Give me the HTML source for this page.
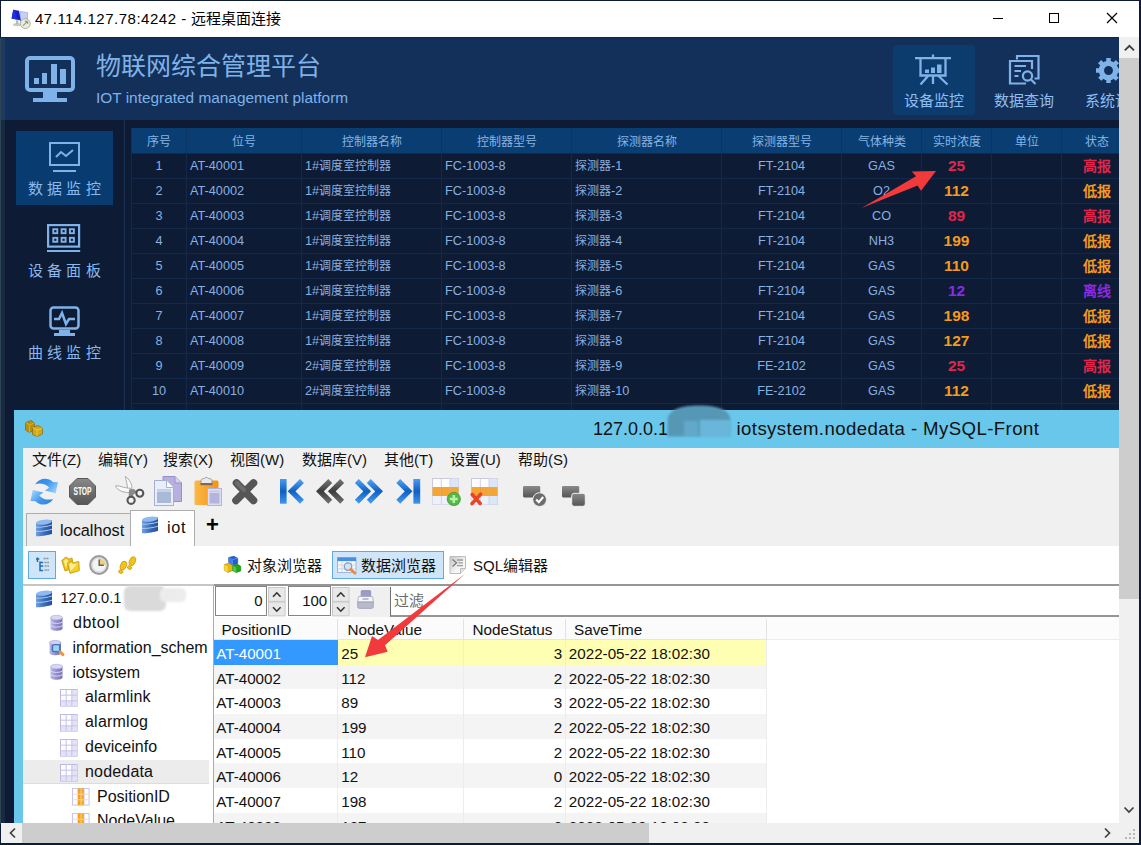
<!DOCTYPE html>
<html lang="zh-CN">
<head>
<meta charset="utf-8">
<title>47.114.127.78:4242 - 远程桌面连接</title>
<style>
*{box-sizing:border-box;margin:0;padding:0}
html,body{width:1141px;height:845px;overflow:hidden;background:#fff}
body{font-family:"Liberation Sans",sans-serif;position:relative;color:#000}
.abs{position:absolute}
svg{display:block;overflow:visible}
#win{position:absolute;left:0;top:0;width:1141px;height:845px;background:#0d1b34;overflow:hidden}
#tbar{position:absolute;left:1px;top:1px;width:1138px;height:36px;background:#fff}
#tbar .ttl{position:absolute;left:34px;top:8.300px;font-size:15px;line-height:20px;white-space:nowrap;color:#000;letter-spacing:0.51px}
#tbar .ttl b{font-weight:normal;font-size:15px;letter-spacing:0}
#view{position:absolute;left:1px;top:37px;width:1118px;height:786px;overflow:hidden;background:#0d1b34}
/* IoT app */
#hdr{position:absolute;left:0;top:0;width:1119px;height:83px;background:#13305a}
#hdr .t1{position:absolute;left:95px;top:11px;font-size:25px;line-height:36px;color:#7fb2e8;white-space:nowrap}
#hdr .t2{position:absolute;left:95px;top:51px;font-size:15.4px;line-height:20px;color:#7fb2e8;white-space:nowrap}
.topbtn{position:absolute;top:8px;height:70px;width:82px;border-radius:4px;color:#8fbdf0;font-size:15px;text-align:center}
.topbtn span{position:absolute;left:0;right:0;top:46px;line-height:20px;white-space:nowrap}
.topbtn.on{background:#0c3b6e}
.topbtn svg{position:absolute;left:22px;top:9px}
.sbtn{position:absolute;left:15px;width:97px;height:74px;color:#8ab8ec;font-size:15px;text-align:center}
.sbtn.on{background:#083c70}
.sbtn span{position:absolute;left:0;right:0;top:47.7px;line-height:20px;letter-spacing:4.2px;padding-left:4px;white-space:nowrap}
.sbtn svg{position:absolute;left:33px;top:11px}
#vsep{position:absolute;left:123px;top:83px;width:1px;height:300px;background:#1c3050}
/* IoT table */
#tbl{position:absolute;left:130px;top:91px;width:1000px;height:300px;font-size:12px;color:#88b1e1;overflow:hidden}
#tbl .hr{position:absolute;left:0;top:0;height:25px;width:1000px;background:#0a3e72}
#tbl .r{position:absolute;left:0;height:25px;width:1000px;border-top:1px solid #14284a}
#tbl .c{position:absolute;top:0;height:25px;line-height:24px;white-space:nowrap;text-align:center;border-left:1px solid #14284a}
#tbl .hr .c{border-left:1px solid #0d3360;color:#86b4e6;line-height:28px}
#tbl .c.l{text-align:left;padding-left:3px}
.en{font-size:12.7px}
#tbl .v{font-weight:bold;font-size:15.5px}
#tbl .s{font-weight:bold;font-size:14px}
.hi{color:#e0264a}.lo{color:#f59a1c}.off{color:#8a2be2}
/* MySQL-Front window */
#my{position:absolute;left:13px;top:373px;width:1200px;height:500px;background:#69c7eb}
#my .cap{position:absolute;top:7.600px;font-size:18px;line-height:22px;white-space:nowrap;color:#111}
#cl{position:absolute;left:9px;top:38px;width:1200px;height:470px;background:#f0f0f0}
.menu{position:absolute;top:2px;font-size:15px;line-height:20px;white-space:nowrap;color:#111}
.ti{position:absolute}
.tab{position:absolute;font-size:16.3px;line-height:22px;white-space:nowrap;color:#111}
#page{position:absolute;left:0;top:98px;width:1200px;height:400px;background:#fff}
.tbtn{position:absolute;font-size:15px;line-height:20px;white-space:nowrap;color:#111}
.tt{position:absolute;font-size:16px;line-height:22px;white-space:nowrap;color:#111}
.tselbg{position:absolute;left:0;width:186px;height:23.5px;background:#ececec;border-bottom:1px solid #dcdcdc}
.gr{position:absolute;left:0;width:553px;height:24.66px;font-size:15.2px;line-height:27px;color:#111;background:#fff;overflow:hidden}
.gr.alt{background:#f4f4f4}
.gr.sel{background:#ffffb3}
.gc{position:absolute;top:0;height:24.66px;white-space:nowrap;border-right:1px solid #ececec}
.c1{left:0;width:124px;padding-left:2.2px}
.c2{left:124px;width:126px;padding-left:3.2px}
.c3{left:250px;width:102px;text-align:right;padding-right:2.7px}
.c4{left:352px;width:201px;padding-left:2.8px}
.gr.sel .c1{background:#3399ff;color:#fff;border-right:none}
.gh{position:absolute;top:0;height:22px;font-size:15.3px;line-height:22px;white-space:nowrap;border-right:1px solid #e2e2e2;color:#111}
/* scrollbars */
#vs{position:absolute;left:1119px;top:37px;width:20px;height:786px;background:#f0f0f0}
#vs .th{position:absolute;left:0;top:21px;width:20px;height:541px;background:#cdcdcd}
#hs{position:absolute;left:1px;top:823px;width:1118px;height:20px;background:#f0f0f0}
#hs .th{position:absolute;left:21px;top:0;width:627px;height:20px;background:#cdcdcd}
#corner{position:absolute;left:1119px;top:823px;width:20px;height:20px;background:#f0f0f0}

#tree{position:absolute;left:0;top:41px;width:190px;height:240px;overflow:hidden;background:#fff}
#gw{position:absolute;left:190px;top:40px;width:1000px;height:300px;background:#fff;border-left:1px solid #ababab}
.num{position:absolute;top:0.4px;height:29.6px;border:1.3px solid #858585;background:#fff;font-size:15px;line-height:27px;text-align:right;padding-right:3px;color:#111}
.spin{position:absolute;top:0.6px;width:17.6px;height:29.4px}

</style>
</head>
<body>
<div id="win">
<svg width="0" height="0" style="position:absolute"><defs><linearGradient id="gB" x1="0" y1="0" x2="0" y2="1"><stop offset="0" stop-color="#4a9bf0"/><stop offset=".5" stop-color="#0f5fc4"/><stop offset="1" stop-color="#3f95ee"/></linearGradient><linearGradient id="gG" x1="0" y1="0" x2="0" y2="1"><stop offset="0" stop-color="#6e6e6e"/><stop offset=".5" stop-color="#3c3c3c"/><stop offset="1" stop-color="#6a6a6a"/></linearGradient><linearGradient id="gR" x1="0" y1="0" x2="1" y2="1"><stop offset="0" stop-color="#7fc4fa"/><stop offset="1" stop-color="#1f7fe4"/></linearGradient><linearGradient id="gO" x1="0" y1="0" x2="1" y2="0"><stop offset="0" stop-color="#fbb847"/><stop offset="1" stop-color="#f39416"/></linearGradient><linearGradient id="gS" x1="0" y1="0" x2="0" y2="1"><stop offset="0" stop-color="#8a8a8a"/><stop offset="1" stop-color="#555"/></linearGradient><linearGradient id="gD" x1="0" y1="0" x2="1" y2="0"><stop offset="0" stop-color="#6fa2e2"/><stop offset=".5" stop-color="#3a6cba"/><stop offset="1" stop-color="#264f98"/></linearGradient><linearGradient id="gP" x1="0" y1="0" x2="1" y2="0"><stop offset="0" stop-color="#bcbaea"/><stop offset=".5" stop-color="#8f8dcc"/><stop offset="1" stop-color="#7674b6"/></linearGradient><linearGradient id="gR2" x1="0" y1="0" x2="1" y2="0.6"><stop offset="0" stop-color="#2a80e6"/><stop offset=".55" stop-color="#3f96ee"/><stop offset="1" stop-color="#8ecbfa"/></linearGradient></defs></svg>
  <div id="tbar">
    <div class="abs" style="left:10px;top:8px"><svg width="20" height="20" viewBox="0 0 20 20"><path d="M9 2.5L16.5 3.5V11.5L9.5 12.5Z" fill="#c7d0f4" stroke="#8e98cc" stroke-width=".6"/><path d="M2.2 0.8L8 1.8L9.8 11.5L0.6 9.6Z" fill="#1420c8"/><path d="M2.2 0.8L4 1.1L5.5 10.6L0.6 9.6Z" fill="#2030dc"/><ellipse cx="6" cy="15.6" rx="4.2" ry="1.6" fill="#c9c9c4"/><path d="M5 11L7.4 11.4V15H5Z" fill="#b9b9b6"/><circle cx="14.3" cy="14.6" r="4.9" fill="#e9eee0" stroke="#a9ae9c" stroke-width="1"/><path d="M12 16.6L16.6 12.4M16.6 12.4H13.8M16.6 12.4V15" stroke="#8f9a78" stroke-width="1.1" fill="none"/></svg></div>
    <div class="ttl">47.114.127.78:4242 - <b>远程桌面连接</b></div>
    <div class="abs" style="left:992px;top:16.5px;width:10px;height:1.2px;background:#000"></div>
    <div class="abs" style="left:1048px;top:12px;width:10px;height:10px;border:1.2px solid #000"></div>
    <svg class="abs" style="left:1106px;top:12px" width="10" height="10"><path d="M0 0L10 10M10 0L0 10" stroke="#000" stroke-width="1.2" fill="none"/></svg>
  </div>
  <div id="view">
    <div id="hdr">
      <div class="abs" style="left:24px;top:19px"><svg width="50" height="47" viewBox="0 0 50 47"><rect x="2" y="2" width="46" height="32" rx="3" fill="none" stroke="#7fb2e8" stroke-width="4"/><rect x="9" y="22" width="5" height="6" fill="#7fb2e8"/><rect x="17" y="17" width="5" height="11" fill="#7fb2e8"/><rect x="26" y="8" width="6" height="20" fill="#7fb2e8"/><rect x="35" y="13" width="6" height="15" fill="#7fb2e8"/><rect x="18" y="36" width="14" height="6" fill="#7fb2e8"/><rect x="8" y="42" width="34" height="4" fill="#7fb2e8"/></svg></div>
      <div class="t1">物联网综合管理平台</div>
      <div class="t2">IOT integrated management platform</div>
      <div class="topbtn on" style="left:892px"><svg width="36" height="32" viewBox="0 0 36 32"><g fill="none" stroke="#7fb2e8" stroke-width="2.3"><path d="M0 4.200H36M18 0.500V4.200M5.500 4.200V21.500H30.500V4.200M5.500 30.500L13.500 21.500M32.500 30.500L23 21.500M18 21.500V30"/></g><rect x="10" y="15.500" width="4" height="3.500" fill="#7fb2e8"/><rect x="16" y="13.500" width="4" height="5.500" fill="#7fb2e8"/><rect x="22" y="10.500" width="4.500" height="8.500" fill="#7fb2e8"/></svg><span>设备监控</span></div>
      <div class="topbtn" style="left:982px"><i style="position:absolute;left:2.500px;top:0"><svg width="32" height="32" viewBox="0 0 32 32"><g fill="none" stroke="#7fb2e8" stroke-width="2.200"><path d="M9 5.500V2H30.500V24.500H26.500"/><path d="M18 29.500H2V7H24V15"/><path d="M6.500 12H18M6.500 17H13M6.500 22H10.500"/><circle cx="19.500" cy="22" r="4.600"/><path d="M23 25.500L27.500 30"/></g></svg></i><span>数据查询</span></div>
      <div class="topbtn" style="left:1073px"><i style="position:absolute;left:-0.100px;top:3.800px"><svg width="25" height="25" viewBox="0 0 28 28"><circle cx="14" cy="14" r="8" fill="none" stroke="#7fb2e8" stroke-width="6"/><g stroke="#7fb2e8" stroke-width="5"><path d="M14 0V28M0 14H28M4 4L24 24M24 4L4 24" stroke-dasharray="5 18 5 100"/></g></svg></i><span>系统设置</span></div>
    </div>
    <div id="vsep"></div>
    <div class="sbtn on" style="top:94px"><svg width="32" height="34" viewBox="0 0 32 34"><g fill="none" stroke="#7fb2e8" stroke-width="2"><rect x="1" y="1" width="29" height="22"/><path d="M7 15L12 10L17 14L24 8"/><path d="M4 29H27"/></g></svg><span>数据监控</span></div>
    <div class="sbtn" style="top:176px"><i style="position:absolute;left:-2.500px;top:0"><svg width="34" height="30" viewBox="0 0 34 30"><g fill="none" stroke="#7fb2e8" stroke-width="2.2"><rect x="1.1" y="1.1" width="31" height="21.5"/><path d="M0 27H33.200"/></g><g fill="none" stroke="#7fb2e8" stroke-width="1.900"><rect x="6.300" y="5.200" width="4" height="4"/><rect x="14.600" y="5.200" width="4" height="4"/><rect x="22.900" y="5.200" width="4" height="4"/><rect x="6.300" y="13.800" width="4" height="4"/><rect x="14.600" y="13.800" width="4" height="4"/><rect x="22.900" y="13.800" width="4" height="4"/></g></svg></i><span>设备面板</span></div>
    <div class="sbtn" style="top:258px"><svg width="32" height="32" viewBox="0 0 32 32"><g fill="none" stroke="#7fb2e8" stroke-width="2.5"><rect x="1.5" y="1.5" width="28" height="21" rx="3"/><path d="M5 13H10L13 7L17 18L20 13H26"/></g><rect x="10" y="24" width="11" height="3" fill="#7fb2e8"/><rect x="5" y="27" width="21" height="3" fill="#7fb2e8"/></svg><span>曲线监控</span></div>
<div id="tbl">
<div class="hr"><div class="c " style="left:0px;width:55px">序号</div><div class="c " style="left:55px;width:115px">位号</div><div class="c " style="left:170px;width:140px">控制器名称</div><div class="c " style="left:310px;width:130px">控制器型号</div><div class="c " style="left:440px;width:150px">探测器名称</div><div class="c " style="left:590px;width:120px">探测器型号</div><div class="c " style="left:710px;width:80px">气体种类</div><div class="c " style="left:790px;width:70px">实时浓度</div><div class="c " style="left:860px;width:70px">单位</div><div class="c " style="left:930px;width:70px">状态</div></div>
<div class="r" style="top:25px"><div class="c en" style="left:0px;width:55px">1</div><div class="c l en" style="left:55px;width:115px">AT-40001</div><div class="c l" style="left:170px;width:140px"><span class="en">1#</span>调度室控制器</div><div class="c l en" style="left:310px;width:130px">FC-1003-8</div><div class="c l" style="left:440px;width:150px">探测器<span class="en">-1</span></div><div class="c en" style="left:590px;width:120px">FT-2104</div><div class="c en" style="left:710px;width:80px">GAS</div><div class="c v hi" style="left:790px;width:70px">25</div><div class="c " style="left:860px;width:70px"></div><div class="c s hi" style="left:930px;width:70px">高报</div></div>
<div class="r" style="top:50px"><div class="c en" style="left:0px;width:55px">2</div><div class="c l en" style="left:55px;width:115px">AT-40002</div><div class="c l" style="left:170px;width:140px"><span class="en">1#</span>调度室控制器</div><div class="c l en" style="left:310px;width:130px">FC-1003-8</div><div class="c l" style="left:440px;width:150px">探测器<span class="en">-2</span></div><div class="c en" style="left:590px;width:120px">FT-2104</div><div class="c en" style="left:710px;width:80px">O2</div><div class="c v lo" style="left:790px;width:70px">112</div><div class="c " style="left:860px;width:70px"></div><div class="c s lo" style="left:930px;width:70px">低报</div></div>
<div class="r" style="top:75px"><div class="c en" style="left:0px;width:55px">3</div><div class="c l en" style="left:55px;width:115px">AT-40003</div><div class="c l" style="left:170px;width:140px"><span class="en">1#</span>调度室控制器</div><div class="c l en" style="left:310px;width:130px">FC-1003-8</div><div class="c l" style="left:440px;width:150px">探测器<span class="en">-3</span></div><div class="c en" style="left:590px;width:120px">FT-2104</div><div class="c en" style="left:710px;width:80px">CO</div><div class="c v hi" style="left:790px;width:70px">89</div><div class="c " style="left:860px;width:70px"></div><div class="c s hi" style="left:930px;width:70px">高报</div></div>
<div class="r" style="top:100px"><div class="c en" style="left:0px;width:55px">4</div><div class="c l en" style="left:55px;width:115px">AT-40004</div><div class="c l" style="left:170px;width:140px"><span class="en">1#</span>调度室控制器</div><div class="c l en" style="left:310px;width:130px">FC-1003-8</div><div class="c l" style="left:440px;width:150px">探测器<span class="en">-4</span></div><div class="c en" style="left:590px;width:120px">FT-2104</div><div class="c en" style="left:710px;width:80px">NH3</div><div class="c v lo" style="left:790px;width:70px">199</div><div class="c " style="left:860px;width:70px"></div><div class="c s lo" style="left:930px;width:70px">低报</div></div>
<div class="r" style="top:125px"><div class="c en" style="left:0px;width:55px">5</div><div class="c l en" style="left:55px;width:115px">AT-40005</div><div class="c l" style="left:170px;width:140px"><span class="en">1#</span>调度室控制器</div><div class="c l en" style="left:310px;width:130px">FC-1003-8</div><div class="c l" style="left:440px;width:150px">探测器<span class="en">-5</span></div><div class="c en" style="left:590px;width:120px">FT-2104</div><div class="c en" style="left:710px;width:80px">GAS</div><div class="c v lo" style="left:790px;width:70px">110</div><div class="c " style="left:860px;width:70px"></div><div class="c s lo" style="left:930px;width:70px">低报</div></div>
<div class="r" style="top:150px"><div class="c en" style="left:0px;width:55px">6</div><div class="c l en" style="left:55px;width:115px">AT-40006</div><div class="c l" style="left:170px;width:140px"><span class="en">1#</span>调度室控制器</div><div class="c l en" style="left:310px;width:130px">FC-1003-8</div><div class="c l" style="left:440px;width:150px">探测器<span class="en">-6</span></div><div class="c en" style="left:590px;width:120px">FT-2104</div><div class="c en" style="left:710px;width:80px">GAS</div><div class="c v off" style="left:790px;width:70px">12</div><div class="c " style="left:860px;width:70px"></div><div class="c s off" style="left:930px;width:70px">离线</div></div>
<div class="r" style="top:175px"><div class="c en" style="left:0px;width:55px">7</div><div class="c l en" style="left:55px;width:115px">AT-40007</div><div class="c l" style="left:170px;width:140px"><span class="en">1#</span>调度室控制器</div><div class="c l en" style="left:310px;width:130px">FC-1003-8</div><div class="c l" style="left:440px;width:150px">探测器<span class="en">-7</span></div><div class="c en" style="left:590px;width:120px">FT-2104</div><div class="c en" style="left:710px;width:80px">GAS</div><div class="c v lo" style="left:790px;width:70px">198</div><div class="c " style="left:860px;width:70px"></div><div class="c s lo" style="left:930px;width:70px">低报</div></div>
<div class="r" style="top:200px"><div class="c en" style="left:0px;width:55px">8</div><div class="c l en" style="left:55px;width:115px">AT-40008</div><div class="c l" style="left:170px;width:140px"><span class="en">1#</span>调度室控制器</div><div class="c l en" style="left:310px;width:130px">FC-1003-8</div><div class="c l" style="left:440px;width:150px">探测器<span class="en">-8</span></div><div class="c en" style="left:590px;width:120px">FT-2104</div><div class="c en" style="left:710px;width:80px">GAS</div><div class="c v lo" style="left:790px;width:70px">127</div><div class="c " style="left:860px;width:70px"></div><div class="c s lo" style="left:930px;width:70px">低报</div></div>
<div class="r" style="top:225px"><div class="c en" style="left:0px;width:55px">9</div><div class="c l en" style="left:55px;width:115px">AT-40009</div><div class="c l" style="left:170px;width:140px"><span class="en">2#</span>调度室控制器</div><div class="c l en" style="left:310px;width:130px">FC-1003-8</div><div class="c l" style="left:440px;width:150px">探测器<span class="en">-9</span></div><div class="c en" style="left:590px;width:120px">FE-2102</div><div class="c en" style="left:710px;width:80px">GAS</div><div class="c v hi" style="left:790px;width:70px">25</div><div class="c " style="left:860px;width:70px"></div><div class="c s hi" style="left:930px;width:70px">高报</div></div>
<div class="r" style="top:250px"><div class="c en" style="left:0px;width:55px">10</div><div class="c l en" style="left:55px;width:115px">AT-40010</div><div class="c l" style="left:170px;width:140px"><span class="en">2#</span>调度室控制器</div><div class="c l en" style="left:310px;width:130px">FC-1003-8</div><div class="c l" style="left:440px;width:150px">探测器<span class="en">-10</span></div><div class="c en" style="left:590px;width:120px">FE-2102</div><div class="c en" style="left:710px;width:80px">GAS</div><div class="c v lo" style="left:790px;width:70px">112</div><div class="c " style="left:860px;width:70px"></div><div class="c s lo" style="left:930px;width:70px">低报</div></div>
<div class="r" style="top:275px"><div class="c " style="left:0px;width:55px"></div><div class="c " style="left:55px;width:115px"></div><div class="c " style="left:170px;width:140px"></div><div class="c " style="left:310px;width:130px"></div><div class="c " style="left:440px;width:150px"></div><div class="c " style="left:590px;width:120px"></div><div class="c " style="left:710px;width:80px"></div><div class="c " style="left:790px;width:70px"></div><div class="c " style="left:860px;width:70px"></div><div class="c " style="left:930px;width:70px"></div></div>
</div>
    <div id="my">
      <div class="abs" style="left:11px;top:10px"><svg width="18" height="17" viewBox="0 0 18 17"><path d="M0.5 2.5L6 0.5L9.5 3V10L4.5 12.5L0.5 10Z" fill="#b8920f" stroke="#86680a" stroke-width=".7"/><path d="M0.5 2.5L4.5 5L9.5 3M4.5 5V12.5" stroke="#d9b632" stroke-width=".8" fill="none"/><path d="M7.5 7.5L13 5.5L17.5 8V14L12 16.5L7.5 14.5Z" fill="#d2a814" stroke="#86680a" stroke-width=".7"/><path d="M7.5 7.5L12 10L17.5 8M12 10V16.5" stroke="#f0d358" stroke-width=".8" fill="none"/></svg></div>
      <div class="cap" style="left:579px">127.0.0.1</div>
      <div class="cap" style="left:722.500px;font-size:18.600px;letter-spacing:0.42px">iotsystem.nodedata - MySQL-Front</div>
      <div id="cl">
        <div class="menu" style="left:9px">文件(Z)</div>
        <div class="menu" style="left:75px">编辑(Y)</div>
        <div class="menu" style="left:140px">搜索(X)</div>
        <div class="menu" style="left:207px">视图(W)</div>
        <div class="menu" style="left:279px">数据库(V)</div>
        <div class="menu" style="left:361px">其他(T)</div>
        <div class="menu" style="left:427px">设置(U)</div>
        <div class="menu" style="left:495px">帮助(S)</div>
        <!-- main toolbar -->
        <div class="ti" style="left:7.3px;top:28.8px"><svg width="28" height="28" viewBox="0 0 28 28"><path d="M5.2 7.2C9 1 17.5 -0.4 23 5L28 5.2L25.6 16.2L15 13.6L19.2 10.8C15.8 6.800 10 5.800 5.2 7.2Z" fill="url(#gR2)"/><path d="M5.2 7.2C9 1 17.5 -0.4 23 5L28 5.2L25.6 16.2L15 13.6L19.2 10.8C15.8 6.800 10 5.800 5.2 7.2Z" fill="url(#gR2)" transform="rotate(180 14.2 14.6)"/></svg></div>
        <div class="ti" style="left:46px;top:29.5px"><svg width="27" height="27" viewBox="0 0 27 27"><path d="M8 0.5H19L26.5 8V19L19 26.5H8L0.5 19V8Z" fill="url(#gS)" stroke="#5a5a5a"/><text x="13.5" y="17.300" font-family="Liberation Sans,sans-serif" font-size="10.300" font-weight="bold" fill="#fff" text-anchor="middle" textLength="18.200" lengthAdjust="spacingAndGlyphs">STOP</text></svg></div>
        <div class="ti" style="left:91.5px;top:28.3px"><svg width="29" height="29" viewBox="0 0 29 29"><path d="M10.400 0.400C12.800 1.600 15.800 6 16.800 9.500V16.200L13.200 16.800C12.600 10 11 4 10.400 0.400Z" fill="#fafafa" stroke="#a2a2a2" stroke-width=".9"/><path d="M0.600 9.800C3.500 9.200 8.500 12 15.500 12.300L16.500 16.500C10 17 2.200 15.200 0.600 9.800Z" fill="#fafafa" stroke="#a2a2a2" stroke-width=".9"/><path d="M14 13.500L19 13L21.800 15.800L18.500 18.500L17.500 21.500L13.800 20.500Z" fill="#8a8a8a"/><circle cx="24.800" cy="17.200" r="3.500" fill="#f4f4f4" stroke="#555" stroke-width="2.100"/><circle cx="16.100" cy="24.300" r="3.600" fill="#f4f4f4" stroke="#555" stroke-width="2.100"/></svg></div>
        <div class="ti" style="left:131px;top:28.4px"><svg width="28" height="30" viewBox="0 0 28 30"><path d="M9 0.5H21L27.5 7V25.5H9Z" fill="#b7b0de" stroke="#9690c8"/><path d="M21 0.5V7H27.5" fill="#d8d4f0" stroke="#9690c8"/><path d="M0.5 4.5H12.5L19.5 11.5V29.5H0.5Z" fill="#e9eefa" stroke="#a3b0d4"/><path d="M12.5 4.5V11.5H19.5" fill="#fff" stroke="#a3b0d4"/><rect x="3" y="15.5" width="14" height="11.5" fill="#a9bad9"/><rect x="3" y="13" width="14" height="2" fill="#c5cfe6"/></svg></div>
        <div class="ti" style="left:170.7px;top:29px"><svg width="28" height="29" viewBox="0 0 28 29"><rect x="0.5" y="3.5" width="24" height="24.5" rx="1.5" fill="url(#gO)"/><path d="M7 6.5V3.5C7 2 9 1.5 10.5 1.5C10.8 0 13.8 0 14.2 1.5C16 1.5 18 2 18 3.5V6.5Z" fill="#e8e8ee" stroke="#8a8a96" stroke-width=".8"/><rect x="6.5" y="6" width="12" height="2.2" fill="#7d6a55"/><rect x="13.5" y="11.5" width="14" height="17" fill="#dcdcf2" stroke="#b4b4d8"/><rect x="15.5" y="16" width="10" height="10.5" fill="#b3b3dc"/><rect x="15.5" y="13.6" width="10" height="1.6" fill="#c6c6e6"/></svg></div>
        <div class="ti" style="left:209.3px;top:30.5px"><svg width="26" height="26" viewBox="0 0 26 26"><path d="M4.500 4L21.500 21.500M21.500 4L4 21.500" stroke="#565656" stroke-width="7.600" stroke-linecap="round" fill="none"/><path d="M5 4L12 11" stroke="#6c6c6c" stroke-width="4" stroke-linecap="round"/></svg></div>
        <div class="ti" style="left:256.8px;top:31.3px"><svg width="25" height="25" viewBox="0 0 25 25"><rect x="0" y="0" width="6.6" height="24.7" fill="url(#gB)"/><path d="M21.94 2L11.59 12.35L21.94 22.7" fill="none" stroke="url(#gB)" stroke-width="5.5"/></svg></div>
        <div class="ti" style="left:293.3px;top:31.3px"><svg width="28" height="25" viewBox="0 0 28 25"><path d="M14.24 2L3.89 12.35L14.24 22.7" fill="none" stroke="url(#gG)" stroke-width="5.5"/><path d="M26.14 2L15.79 12.35L26.14 22.7" fill="none" stroke="url(#gG)" stroke-width="5.5"/></svg></div>
        <div class="ti" style="left:332px;top:31.3px"><svg width="28" height="25" viewBox="0 0 28 25"><path d="M1.86 2L12.21 12.35L1.86 22.7" fill="none" stroke="url(#gB)" stroke-width="5.5"/><path d="M13.76 2L24.11 12.35L13.76 22.7" fill="none" stroke="url(#gB)" stroke-width="5.5"/></svg></div>
        <div class="ti" style="left:372.5px;top:31.3px"><svg width="25" height="25" viewBox="0 0 25 25"><path d="M2.26 2L12.61 12.35L2.26 22.7" fill="none" stroke="url(#gB)" stroke-width="5.5"/><rect x="17.4" y="0" width="6.8" height="24.7" fill="url(#gB)"/></svg></div>
        <div class="ti" style="left:409px;top:30px"><svg width="28" height="28" viewBox="0 0 28 28"><rect x="0.5" y="0.5" width="26" height="26" fill="#fdfdff" stroke="#c9c9dc"/><rect x="0.5" y="9" width="26" height="9" fill="#f7a532"/><rect x="18" y="0.5" width="8.5" height="8.5" fill="#dbe6f7"/><rect x="18" y="18" width="8.5" height="8.5" fill="#dbe6f7"/><rect x="0.5" y="18" width="17.5" height="8.5" fill="#eef0fa"/><path d="M9.3 0.5V26.5M18 0.5V26.5" stroke="#d4d0e0" stroke-width="1"/><path d="M9.3 9V18M18 9V18" stroke="#e9952a" stroke-width="1"/><circle cx="21.8" cy="21" r="6.6" fill="#52b947" stroke="#3a9a34" stroke-width=".8"/><path d="M21.8 17V25M17.8 21H25.8" stroke="#b9f0a8" stroke-width="2.6"/></svg></div>
        <div class="ti" style="left:447.8px;top:30px"><svg width="28" height="28" viewBox="0 0 28 28"><rect x="0.5" y="0.5" width="26" height="26" fill="#fdfdff" stroke="#c9c9dc"/><rect x="0.5" y="9" width="26" height="9" fill="#f7a532"/><rect x="18" y="0.5" width="8.5" height="8.5" fill="#dbe6f7"/><rect x="18" y="18" width="8.5" height="8.5" fill="#dbe6f7"/><rect x="0.5" y="18" width="17.5" height="8.5" fill="#eef0fa"/><path d="M9.3 0.5V26.5M18 0.5V26.5" stroke="#d4d0e0" stroke-width="1"/><path d="M9.3 9V18M18 9V18" stroke="#e9952a" stroke-width="1"/><path d="M1.2 16.5L9.2 25.5M9.6 16.2L1 25.6" stroke="#ea4424" stroke-width="3.6" stroke-linecap="round"/></svg></div>
        <div class="ti" style="left:499.7px;top:37.6px"><svg width="24" height="22" viewBox="0 0 24 22"><rect x="0" y="0" width="17.2" height="11.4" rx="1.3" fill="url(#gS)"/><circle cx="16.6" cy="13.6" r="6.9" fill="#6c6c6c" stroke="#f0f0f0" stroke-width="1"/><path d="M13.2 13.6L15.8 16.2L20.2 11" stroke="#fff" stroke-width="2.1" fill="none"/></svg></div>
        <div class="ti" style="left:538.5px;top:37.6px"><svg width="24" height="22" viewBox="0 0 24 22"><rect x="0" y="0" width="17.2" height="11.4" rx="1.3" fill="url(#gS)"/><rect x="9.7" y="7.3" width="13.6" height="13" rx="2.4" fill="url(#gS)" stroke="#f0f0f0" stroke-width="1"/></svg></div>
        <!-- tabs -->
        <div class="abs" style="left:3px;top:65px;width:105px;height:34px;border:1.6px solid #adadad;border-bottom:none;background:#ececec"></div>
        <div class="abs" style="left:12px;top:71px"><svg width="18" height="18" viewBox="0 0 18 18"><path d="M1 4.200C4 2 13 0.800 17 1.600V15C13 16 5 17.800 1 17.200Z" fill="url(#gD)"/><ellipse cx="9" cy="3.200" rx="8" ry="2.500" fill="#8fbaf0" transform="rotate(-6 9 3.200)"/><path d="M1 8.200C5 8.600 13 7.400 17 6M1 12.400C5 12.800 13 11.600 17 10.200" stroke="#a9c9f2" stroke-width="1" fill="none"/></svg></div>
        <div class="tab" style="left:37px;top:71px">localhost</div>
        <div class="abs" style="left:107px;top:62px;width:65px;height:37px;border:1.6px solid #adadad;border-bottom:none;background:#fff"></div>
        <div class="abs" style="left:118px;top:68px"><svg width="18" height="18" viewBox="0 0 18 18"><path d="M1 4.200C4 2 13 0.800 17 1.600V15C13 16 5 17.800 1 17.200Z" fill="url(#gD)"/><ellipse cx="9" cy="3.200" rx="8" ry="2.500" fill="#8fbaf0" transform="rotate(-6 9 3.200)"/><path d="M1 8.200C5 8.600 13 7.400 17 6M1 12.400C5 12.800 13 11.600 17 10.200" stroke="#a9c9f2" stroke-width="1" fill="none"/></svg></div>
        <div class="tab" style="left:144px;top:68px;letter-spacing:0.7px">iot</div>
        <div class="abs" style="left:183px;top:66px;font-size:22px;font-weight:bold;line-height:22px">+</div>
        <div id="page">
          <!-- sub toolbar -->
          <div class="abs" style="left:5px;top:5px;width:28px;height:28px;background:#cfe6fa;border:1.4px solid #5ea9e6"></div>
          <div class="abs" style="left:13px;top:11px"><svg width="14" height="16" viewBox="0 0 14 16"><path d="M1.500 0.500V5M0 2H3.300M4 4.500V13.500H7.200M4 9H7.200M4 5.500H7.200" stroke="#1f6cb8" stroke-width="1.500" fill="none"/><path d="M7.500 1.500H13M8.500 5.500H13M8.500 9H13M8.500 13H13" stroke="#9096a0" stroke-width="1.600" stroke-dasharray="2.200 .6"/></svg></div>
          <div class="abs" style="left:38px;top:9.5px"><svg width="19" height="18" viewBox="0 0 19 18"><path d="M0.800 4.500L5 1L8 3.200L11 2L12.500 12L4 15Z" fill="#f0c010" stroke="#c79a10" stroke-width=".9"/><path d="M2.500 5L5 2.800L7.500 4.800L5 12.500Z" fill="#fae988"/><path d="M6.500 7.200L10 5L12.400 6.800L17.800 5.400L18.300 14.600L9 17.400Z" fill="#f7d020" stroke="#c79a10" stroke-width=".9"/><path d="M8.300 8.400L10 7L12 8.500L16.300 7.400L13 11.500L9.500 15Z" fill="#fdf0a0"/></svg></div>
          <div class="abs" style="left:66px;top:8.6px"><svg width="20" height="20" viewBox="0 0 20 20"><circle cx="10" cy="10" r="8.800" fill="#f1f4f8" stroke="#9c9c9c" stroke-width="2.200"/><circle cx="10" cy="10" r="6.900" fill="none" stroke="#d4d4d4" stroke-width=".9"/><path d="M10 10V3.600A6.400 6.400 0 0 1 16.400 10Z" fill="#ead27a"/><path d="M10.200 4.600V10.300H14.800" stroke="#6a6250" stroke-width="1.500" fill="none"/></svg></div>
          <div class="abs" style="left:95px;top:9.5px"><svg width="19" height="18" viewBox="0 0 19 18"><g fill="#f3c318" stroke="#c99c0c" stroke-width=".8"><ellipse cx="5.4" cy="9.6" rx="2.9" ry="4.6" transform="rotate(22 5.4 9.6)"/><ellipse cx="2.8" cy="15.7" rx="2.2" ry="1.7" transform="rotate(22 2.8 15.7)"/><ellipse cx="14.4" cy="5.2" rx="2.9" ry="4.6" transform="rotate(22 14.4 5.2)"/><ellipse cx="11.6" cy="11.6" rx="2.2" ry="1.7" transform="rotate(22 11.6 11.6)"/></g></svg></div>
          <div class="abs" style="left:201.300px;top:10px"><svg width="17" height="17" viewBox="0 0 18 18"><g stroke-width=".6"><path d="M5 1.500L10.500 0.300L14.500 2.400V8L9 9.600L5 7Z" fill="#1f5fd6" stroke="#14409a"/><path d="M5 1.500L9 3.800L14.500 2.400M9 3.800V9.600" stroke="#7fb0f4" fill="none"/><path d="M5 1.500L9 3.800V9.600L5 7Z" fill="#3f80ea"/><path d="M0.300 9L5 7.800L9 10V15.600L4 17.400L0.300 15Z" fill="#e6b80e" stroke="#a88208"/><path d="M0.300 9L4 11.200V17.400L0.300 15Z" fill="#f6d63a"/><path d="M9.300 10L14 8.600L17.700 10.800V15.800L13 17.600L9.300 15.600Z" fill="#1fa21c" stroke="#127412"/><path d="M9.300 10L13 12.200V17.600L9.300 15.600Z" fill="#48cc40"/></g></svg></div>
          <div class="tbtn" style="left:224px;top:10px">对象浏览器</div>
          <div class="abs" style="left:309px;top:5px;width:112px;height:28px;background:#cfe6fa;border:1.4px solid #5ea9e6"></div>
          <div class="abs" style="left:313.500px;top:11.300px"><svg width="21" height="18" viewBox="0 0 21 18"><rect x="0.500" y="0.500" width="18.500" height="15" fill="#f4f7fc" stroke="#9fb4d6"/><rect x="0.500" y="0.500" width="18.500" height="3.600" fill="#4a8ee0"/><path d="M0.500 8H19M0.500 11.800H19M5 4.100V15.500M9.700 4.100V15.500M14.400 4.100V15.500" stroke="#c3d3ea" stroke-width=".8"/><circle cx="11" cy="9.600" r="3.700" fill="#cfe4f6" stroke="#8f9cb4" stroke-width="1.300"/><path d="M13.800 12.400L18 16.200" stroke="#ee8a3c" stroke-width="2.800" stroke-linecap="round"/></svg></div>
          <div class="tbtn" style="left:338px;top:10px">数据浏览器</div>
          <div class="abs" style="left:426px;top:9.800px"><svg width="18" height="18" viewBox="0 0 18 18"><defs><linearGradient id="gQ" x1="0" y1="0" x2="1" y2="1"><stop offset="0" stop-color="#c4c4c4"/><stop offset=".6" stop-color="#f4f4f4"/><stop offset="1" stop-color="#fdfdfd"/></linearGradient></defs><path d="M1 0.500H16.500V12.500L11.500 17.500H1Z" fill="url(#gQ)" stroke="#bdbdbd"/><path d="M16.500 12.500H11.500V17.500" fill="#e3e3e3" stroke="#bdbdbd"/><path d="M3.500 3.500L7.500 6.800L3.500 10.500" stroke="#7d7d7d" stroke-width="1.400" fill="none"/><path d="M8 4H14M9.500 6.800H14M8 9.600H14" stroke="#9a9a9a" stroke-width="1.300"/></svg></div>
          <div class="tbtn" style="left:450px;top:10px">SQL编辑器</div>
          <div class="abs" style="left:0;top:38px;width:191px;height:1.5px;background:#c6c6c6"></div><div class="abs" style="left:191px;top:38.300px;width:1200px;height:2.200px;background:#969696"></div>
          <div id="tree">
<div class="abs" style="left:12px;top:3.0px"><svg width="18" height="18" viewBox="0 0 18 18"><path d="M1 4.200C4 2 13 0.800 17 1.600V15C13 16 5 17.800 1 17.200Z" fill="url(#gD)"/><ellipse cx="9" cy="3.200" rx="8" ry="2.500" fill="#8fbaf0" transform="rotate(-6 9 3.200)"/><path d="M1 8.200C5 8.600 13 7.400 17 6M1 12.400C5 12.800 13 11.600 17 10.200" stroke="#a9c9f2" stroke-width="1" fill="none"/></svg></div>
<div class="tt" style="left:37.5px;top:-0.4px;font-size:14.6px">127.0.0.1</div>
<div class="abs" style="left:27px;top:27.8px"><svg width="13" height="16" viewBox="0 0 13 16"><path d="M0.5 2.6V13.4C0.5 16.4 12.5 16.4 12.5 13.4V2.6Z" fill="url(#gP)"/><ellipse cx="6.5" cy="2.6" rx="6" ry="2.3" fill="#d9d8f4" stroke="#a9a7da" stroke-width=".6"/><path d="M0.5 6.3C0.5 9.1 12.5 9.1 12.5 6.3M0.5 10C0.5 12.8 12.5 12.8 12.5 10" stroke="#e2e1f6" stroke-width=".9" fill="none"/></svg></div>
<div class="tt" style="left:50px;top:24.9px;letter-spacing:0.53px">dbtool</div>
<div class="abs" style="left:26px;top:52.6px"><svg width="16" height="16" viewBox="0 0 16 16"><path d="M0.500 2.600V13C0.500 16 12 16 12 13V2.600Z" fill="url(#gP)"/><ellipse cx="6.200" cy="2.600" rx="5.800" ry="2.200" fill="#d2d0f2" stroke="#a19fd4" stroke-width=".6"/><rect x="3.400" y="4.600" width="7.400" height="7" rx="1.800" fill="#8fd6f2" stroke="#4d6cb4" stroke-width="1.400"/><path d="M11 11.800L14 14.600" stroke="#f0953a" stroke-width="3" stroke-linecap="round"/></svg></div>
<div class="tt" style="left:49.5px;top:49.7px">information_schem</div>
<div class="abs" style="left:27px;top:77.4px"><svg width="13" height="16" viewBox="0 0 13 16"><path d="M0.5 2.6V13.4C0.5 16.4 12.5 16.4 12.5 13.4V2.6Z" fill="url(#gP)"/><ellipse cx="6.5" cy="2.6" rx="6" ry="2.3" fill="#d9d8f4" stroke="#a9a7da" stroke-width=".6"/><path d="M0.5 6.3C0.5 9.1 12.5 9.1 12.5 6.3M0.5 10C0.5 12.8 12.5 12.8 12.5 10" stroke="#e2e1f6" stroke-width=".9" fill="none"/></svg></div>
<div class="tt" style="left:49.5px;top:74.5px">iotsystem</div>
<div class="abs" style="left:37px;top:102.2px"><svg width="18" height="18" viewBox="0 0 18 18"><rect x="0.5" y="0.5" width="16.6" height="16.6" fill="#fdfdff" stroke="#bcb9e2"/><rect x="12" y="1" width="4.6" height="15.6" fill="#e4e2f6"/><rect x="1" y="12" width="15.6" height="4.6" fill="#e4e2f6"/><path d="M6.2 0.5V17M11.8 0.5V17M0.5 6.2H17M0.5 11.8H17" stroke="#c5c2e8" stroke-width="1"/></svg></div>
<div class="tt" style="left:62px;top:99.3px;letter-spacing:0.2px">alarmlink</div>
<div class="abs" style="left:37px;top:127.0px"><svg width="18" height="18" viewBox="0 0 18 18"><rect x="0.5" y="0.5" width="16.6" height="16.6" fill="#fdfdff" stroke="#bcb9e2"/><rect x="12" y="1" width="4.6" height="15.6" fill="#e4e2f6"/><rect x="1" y="12" width="15.6" height="4.6" fill="#e4e2f6"/><path d="M6.2 0.5V17M11.8 0.5V17M0.5 6.2H17M0.5 11.8H17" stroke="#c5c2e8" stroke-width="1"/></svg></div>
<div class="tt" style="left:62px;top:124.1px;letter-spacing:0.22px">alarmlog</div>
<div class="abs" style="left:37px;top:151.8px"><svg width="18" height="18" viewBox="0 0 18 18"><rect x="0.5" y="0.5" width="16.6" height="16.6" fill="#fdfdff" stroke="#bcb9e2"/><rect x="12" y="1" width="4.6" height="15.6" fill="#e4e2f6"/><rect x="1" y="12" width="15.6" height="4.6" fill="#e4e2f6"/><path d="M6.2 0.5V17M11.8 0.5V17M0.5 6.2H17M0.5 11.8H17" stroke="#c5c2e8" stroke-width="1"/></svg></div>
<div class="tt" style="left:62px;top:148.9px">deviceinfo</div>
<div class="tselbg" style="top:173.4px"></div>
<div class="abs" style="left:37px;top:176.6px"><svg width="18" height="18" viewBox="0 0 18 18"><rect x="0.5" y="0.5" width="16.6" height="16.6" fill="#fdfdff" stroke="#bcb9e2"/><rect x="12" y="1" width="4.6" height="15.6" fill="#e4e2f6"/><rect x="1" y="12" width="15.6" height="4.6" fill="#e4e2f6"/><path d="M6.2 0.5V17M11.8 0.5V17M0.5 6.2H17M0.5 11.8H17" stroke="#c5c2e8" stroke-width="1"/></svg></div>
<div class="tt" style="left:62px;top:173.7px;letter-spacing:0.18px">nodedata</div>
<div class="abs" style="left:49px;top:201.4px"><svg width="18" height="18" viewBox="0 0 18 18"><rect x="0.5" y="0.5" width="16.6" height="16.6" fill="#fdfdff" stroke="#c8c6e6"/><rect x="5.6" y="0.5" width="6.4" height="16.6" fill="#f7a11d"/><rect x="8.2" y="0.5" width="2" height="16.6" fill="#fbbf57"/><path d="M0.5 6.2H17M0.5 11.8H17" stroke="#e9dccb" stroke-width=".9"/><path d="M12.2 0.5V17" stroke="#d4d0e6" stroke-width=".8"/></svg></div>
<div class="tt" style="left:74px;top:198.5px">PositionID</div>
<div class="abs" style="left:49px;top:226.2px"><svg width="18" height="18" viewBox="0 0 18 18"><rect x="0.5" y="0.5" width="16.6" height="16.6" fill="#fdfdff" stroke="#c8c6e6"/><rect x="5.6" y="0.5" width="6.4" height="16.6" fill="#f7a11d"/><rect x="8.2" y="0.5" width="2" height="16.6" fill="#fbbf57"/><path d="M0.5 6.2H17M0.5 11.8H17" stroke="#e9dccb" stroke-width=".9"/><path d="M12.2 0.5V17" stroke="#d4d0e6" stroke-width=".8"/></svg></div>
<div class="tt" style="left:74px;top:223.3px">NodeValue</div>
          </div>
          <div id="gw">
            <div class="num" style="left:0.5px;width:52.2px">0</div>
            <div class="spin" style="left:54px"><svg width="17.6" height="29.4" viewBox="0 0 17.6 29.4"><rect x="0.5" y="0.5" width="16.6" height="13.9" fill="#e8e8e8" stroke="#c8c8c8"/><rect x="0.5" y="15" width="16.6" height="13.9" fill="#e8e8e8" stroke="#c8c8c8"/><path d="M5 9.8L8.8 5.8L12.6 9.8M5 20.2L8.8 24.2L12.6 20.2" stroke="#333" stroke-width="1.6" fill="none"/></svg></div>
            <div class="num" style="left:73.5px;width:43.7px">100</div>
            <div class="spin" style="left:118px"><svg width="17.6" height="29.4" viewBox="0 0 17.6 29.4"><rect x="0.5" y="0.5" width="16.6" height="13.9" fill="#e8e8e8" stroke="#c8c8c8"/><rect x="0.5" y="15" width="16.6" height="13.9" fill="#e8e8e8" stroke="#c8c8c8"/><path d="M5 9.8L8.8 5.8L12.6 9.8M5 20.2L8.8 24.2L12.6 20.2" stroke="#333" stroke-width="1.6" fill="none"/></svg></div>
                        <div class="abs" style="left:135.500px;top:0.500px;width:41px;height:30px;background:#f0f0f0"></div>
            <div class="abs" style="left:176px;top:0.500px;width:900px;height:30px;border-left:1.600px solid #707070;border-bottom:2px solid #949494;background:#fff;font-size:15px;line-height:27px;padding-left:2.500px;color:#6b6b6b">过滤</div>
            <div class="abs" style="left:143.300px;top:3.500px"><svg width="17" height="19" viewBox="0 0 17 19"><rect x="4.200" y="0.600" width="9.500" height="6.500" rx="1" fill="#9c9cc4" stroke="#8484b0" stroke-width=".7"/><path d="M1.500 6.500H15.500L16.400 12H0.600Z" fill="#f6f6fa" stroke="#a4a4c4" stroke-width=".8"/><rect x="5.500" y="8.200" width="6" height="1.700" fill="#b4b4d0"/><path d="M0.600 12H16.400V16.500C16.400 18 15.500 18.400 14.500 18.400H2.500C1.500 18.400 0.600 18 0.600 16.500Z" fill="#b9b9c9" stroke="#9a9ab0" stroke-width=".7"/></svg></div>
            <div class="abs" style="left:0;top:31px;width:553px;height:23px;background:#fbfbfb;border-bottom:1px solid #e5e5e5"></div>
            <div class="abs" style="left:553px;top:31px;width:400px;height:23px;background:#fcfcfc;border-bottom:1px solid #ededed"></div>
            <div class="gh" style="left:0;top:33px;width:124px;padding-left:7.6px">PositionID</div>
            <div class="gh" style="left:124px;top:33px;width:126px;padding-left:9.4px">NodeValue</div>
            <div class="gh" style="left:250px;top:33px;width:102px;padding-left:8.5px">NodeStatus</div>
            <div class="gh" style="left:352px;top:33px;width:201px;padding-left:8px">SaveTime</div>
<div class="gr sel" style="top:54.15px"><div class="gc c1">AT-40001</div><div class="gc c2">25</div><div class="gc c3">3</div><div class="gc c4">2022-05-22 18:02:30</div></div>
<div class="gr alt" style="top:78.81px"><div class="gc c1">AT-40002</div><div class="gc c2">112</div><div class="gc c3">2</div><div class="gc c4">2022-05-22 18:02:30</div></div>
<div class="gr" style="top:103.47px"><div class="gc c1">AT-40003</div><div class="gc c2">89</div><div class="gc c3">3</div><div class="gc c4">2022-05-22 18:02:30</div></div>
<div class="gr alt" style="top:128.13px"><div class="gc c1">AT-40004</div><div class="gc c2">199</div><div class="gc c3">2</div><div class="gc c4">2022-05-22 18:02:30</div></div>
<div class="gr" style="top:152.79px"><div class="gc c1">AT-40005</div><div class="gc c2">110</div><div class="gc c3">2</div><div class="gc c4">2022-05-22 18:02:30</div></div>
<div class="gr alt" style="top:177.45px"><div class="gc c1">AT-40006</div><div class="gc c2">12</div><div class="gc c3">0</div><div class="gc c4">2022-05-22 18:02:30</div></div>
<div class="gr" style="top:202.11px"><div class="gc c1">AT-40007</div><div class="gc c2">198</div><div class="gc c3">2</div><div class="gc c4">2022-05-22 18:02:30</div></div>
<div class="gr alt" style="top:226.77px"><div class="gc c1">AT-40008</div><div class="gc c2">127</div><div class="gc c3">2</div><div class="gc c4">2022-05-22 18:02:30</div></div>
          </div>
        </div>
      </div>
    </div>
  </div>
  <svg id="ov" class="abs" style="left:0;top:0;pointer-events:none" width="1141" height="845" viewBox="0 0 1141 845">
    <defs><filter id="bl" x="-20%" y="-20%" width="140%" height="140%"><feGaussianBlur stdDeviation="1.3"/></filter></defs>
    <g filter="url(#bl)">
      <path d="M667.500 421C667.500 411 678 405.500 699 405.500C720 405.500 730.500 411 730.500 421V436.500H667.500Z" fill="#5797b6"/>
      <rect x="684" y="421" width="14" height="15.500" fill="#62a8ca"/><rect x="700" y="420" width="30" height="16.500" fill="#69b6da"/>
    </g>
    <g filter="url(#bl)">
      <rect x="124" y="586" width="42" height="25" rx="6" fill="#dadada"/><rect x="160" y="588" width="26" height="14" rx="5" fill="#ececec"/>
    </g>
    <path d="M861.600 208L916 176.300L911.700 171.500L936 171L921 190.700L917.600 185.600Z" fill="#f23a3c"/>
    <path d="M465.200 573.700L378 640L372 636L365 657.300L387.700 651.700L385 645.200Z" fill="#f23a3c"/>
  </svg>
  <div class="abs" style="left:0;top:37px;width:1119px;height:1px;background:#1a2632"></div>
  <div class="abs" style="left:0;top:38px;width:1px;height:786px;background:#2c4658"></div>
  <div class="abs" style="left:1px;top:38px;width:4px;height:785px;background:rgba(90,120,130,0.16)"></div>
  <div id="vs"><div class="th"></div><svg class="abs" style="left:0;top:0" width="20" height="786"><path d="M5.800 13.400L10.400 8.800L15 13.400" stroke="#404040" stroke-width="1.9" fill="none"/><path d="M5.5 770.5L10 775L14.5 770.5" stroke="#404040" stroke-width="1.7" fill="none"/></svg></div>
  <div id="hs"><div class="th"></div><svg class="abs" style="left:0;top:0" width="1118" height="20"><path d="M14 5.5L9.5 10L14 14.5" stroke="#404040" stroke-width="1.7" fill="none"/><path d="M1104 5.5L1108.5 10L1104 14.5" stroke="#404040" stroke-width="1.7" fill="none"/></svg></div>
  <div id="corner"><svg width="20" height="20"><g fill="#b8b8b8"><rect x="14" y="14" width="2" height="2"/><rect x="14" y="10" width="2" height="2"/><rect x="10" y="14" width="2" height="2"/><rect x="14" y="6" width="2" height="2"/><rect x="10" y="10" width="2" height="2"/><rect x="6" y="14" width="2" height="2"/></g></svg></div>
</div>
</body>
</html>
